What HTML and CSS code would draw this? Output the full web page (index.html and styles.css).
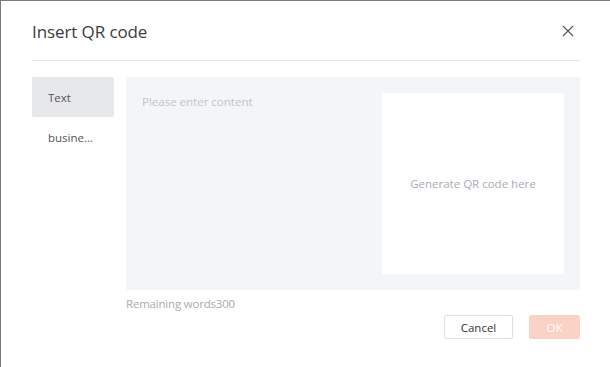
FILE: index.html
```html
<!DOCTYPE html>
<html lang="en">
<head>
  <meta charset="UTF-8" />
  <meta name="viewport" content="width=device-width, initial-scale=1.0"/>
  <title>Insert QR code</title>
  <link rel="stylesheet" href="styles.css">
</head>
<body>
  <div class="dialog">
    <div class="dialog-header">
      <h2>Insert QR code</h2>
      <button class="close-btn" aria-label="Close">
        <svg width="12" height="12" viewBox="0 0 12 12">
          <path d="M1 1 L11 11 M11 1 L1 11" stroke="#555" stroke-width="1.1" fill="none"/>
        </svg>
      </button>
    </div>

    <div class="dialog-body">
      <ul class="tabs">
        <li class="tab active">Text</li>
        <li class="tab">busine...</li>
      </ul>
      <div class="editor">
        <div class="placeholder">Please enter content</div>
        <div class="qr-box">Generate QR code here</div>
      </div>
    </div>

    <div class="remaining">Remaining words300</div>

    <div class="dialog-footer">
      <button class="btn btn-cancel">Cancel</button>
      <button class="btn btn-ok">OK</button>
    </div>
  </div>
</body>
</html>
```

FILE: styles.css
```css
body {
  margin: 0;
  font-family: "Open Sans", "Noto Sans", Arial, sans-serif;
  background-color: #fff;
}

.dialog {
  height: 366px;
  border-top: 1px solid #7a7a7a;
  border-left: 1px solid #7a7a7a;
  padding: 0 30px 0 31px;
  background: #fff;
}

.dialog-header {
  display: flex;
  align-items: center;
  justify-content: space-between;
  height: 59px;
  border-bottom: 1px solid #e4e7ed;
}

.dialog-header h2 {
  margin: 0;
  font-size: 17px;
  font-weight: 400;
  color: #3c3c3c;
  line-height: 24px;
  margin-top: 2px;
  letter-spacing: -0.1px;
}

.close-btn {
  display: flex;
  background: none;
  border: none;
  padding: 0;
  margin-right: 6px;
  margin-top: 1px;
  cursor: pointer;
}

/* body */
.dialog-body {
  display: flex;
  gap: 12px;
  margin-top: 16px;
}

.tabs {
  list-style: none;
  margin: 0;
  padding: 0;
  width: 82px;
  flex-shrink: 0;
}

.tab {
  height: 40px;
  line-height: 41px;
  padding-left: 16px;
  font-size: 11.5px;
  color: #555;
  border-radius: 2px;
}

.tab.active {
  background-color: #e6e8eb;
}

.editor {
  flex-grow: 1;
  display: flex;
  justify-content: space-between;
  height: 181px;
  padding: 16px;
  background-color: #f4f5f7;
}

.placeholder {
  font-size: 11.5px;
  color: #c0c4cc;
  line-height: 18px;
}

.qr-box {
  width: 182px;
  display: flex;
  align-items: center;
  justify-content: center;
  background: #fff;
  font-size: 11.5px;
  color: #a8abb2;
}

.remaining {
  margin-top: 4px;
  margin-left: 94px;
  font-size: 11.5px;
  line-height: 20px;
  color: #a8abb2;
  letter-spacing: -0.2px;
}

.dialog-footer {
  display: flex;
  justify-content: flex-end;
  gap: 16px;
  margin-top: 1px;
}

.btn {
  height: 24px;
  font-family: inherit;
  font-size: 11.5px;
  border-radius: 2px;
  cursor: pointer;
}

.btn-cancel {
  width: 69px;
  background: #fff;
  color: #333;
  border: 1px solid #dcdfe6;
}

.btn-ok {
  width: 51px;
  background: #fad2c6;
  color: #fff;
  border: none;
}
```
